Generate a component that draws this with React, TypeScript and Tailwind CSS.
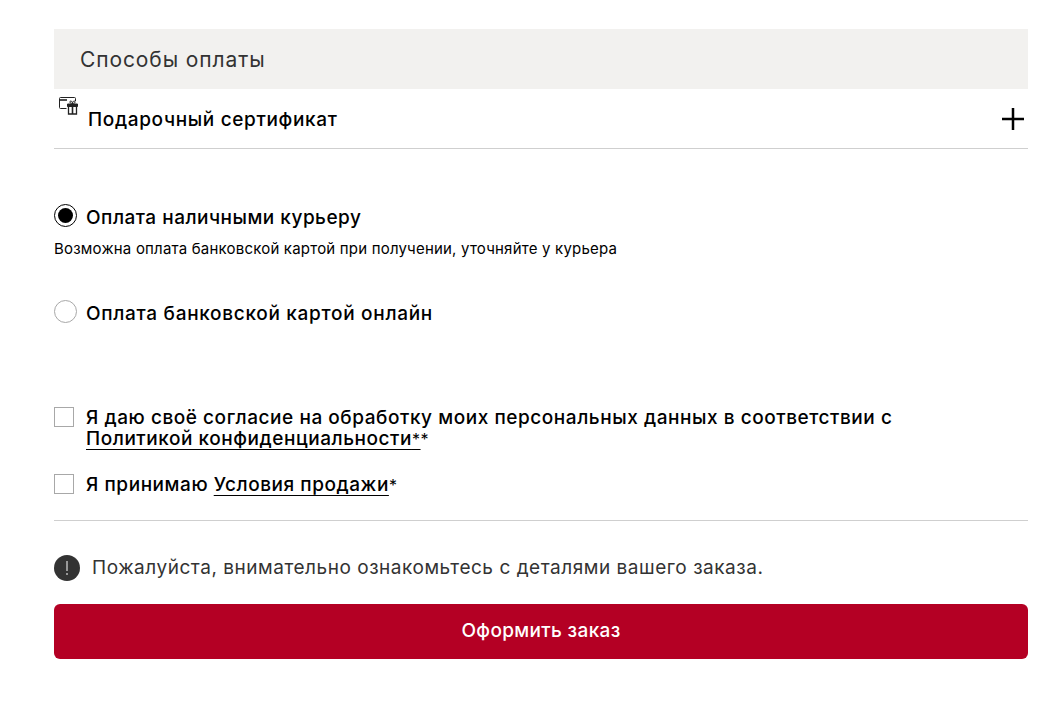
const font = "font-['Inter','Noto_Sans',sans-serif]";

function GiftCardIcon() {
  return (
    <svg width="20" height="18" viewBox="0 0 20 18" fill="none" stroke="#222" strokeWidth="1">
      <path d="M7.500 11.500H1.500a1 1 0 0 1-1-1V1.500a1 1 0 0 1 1-1h14a1 1 0 0 1 1 1V4" />
      <path d="M1 3h7" strokeWidth="1.600" />
      <path d="M8.500 7h10v2.500h-10z" fill="#222" />
      <path d="M9.500 9.500v7.500h8V9.500" strokeWidth="1.300" />
      <path d="M13.500 7v10" strokeWidth="1.600" />
      <path d="M13.500 7c-2.500 0-3.500-3-1.700-3 1.200 0 1.700 1.500 1.700 3zM13.500 7c2.500 0 3.500-3 1.700-3-1.200 0-1.700 1.500-1.700 3z" />
    </svg>
  );
}

function WarningIcon() {
  return (
    <svg width="26" height="26" viewBox="0 0 26 26" className="shrink-0">
      <circle cx="13" cy="13" r="13" fill="#333" />
      <rect x="12.250" y="6" width="1.500" height="10" fill="#bbb" />
      <rect x="12.250" y="18" width="1.500" height="2" fill="#bbb" />
    </svg>
  );
}

function Radio({ checked }: { checked?: boolean }) {
  return (
    <span className={`flex h-[23px] w-[23px] shrink-0 items-center justify-center rounded-full border bg-white ${checked ? 'border-black' : 'border-[#a8a8a8]'}`}>
      {checked && <span className="h-[15px] w-[15px] rounded-full bg-black"></span>}
    </span>
  );
}

function Checkbox() {
  return <span className="block h-5 w-5 shrink-0 border border-[#a8a8a8] bg-white"></span>;
}

export default function App() {
  return (
    <div className={`${font} h-[701px] w-[1047px] overflow-hidden bg-white pl-[54px] pr-[19px] pt-[29px] text-black`}>
      <div className="flex h-[60px] items-center bg-[#f2f1ef] pl-[26px] pt-[2px] text-[21px] tracking-[0.9px] text-[#333]">
        Способы оплаты
      </div>

      {/* Gift certificate row */}
      <div className="relative flex h-[60px] items-center justify-between border-b border-[#cfcfcf] pl-[34px] pr-[4px]">
        <span className="absolute left-[5px] top-[8px]">
          <GiftCardIcon />
        </span>
        <span className="pt-[4px] text-[19px] font-medium tracking-[0.65px]">Подарочный сертификат</span>
        <svg width="22" height="22" viewBox="0 0 22 22" stroke="#000" strokeWidth="2.500">
          <path d="M11 0v22M0 11h22" />
        </svg>
      </div>

      <div className="pt-[55px]">
        <label className="flex items-start gap-[9px]">
          <Radio checked />
          <span className="mt-[2px] text-[19px] font-medium leading-[24px] tracking-[0.5px]">Оплата наличными курьеру</span>
        </label>
        <p className="mt-[9px] text-[15px] leading-[20px] tracking-[0.2px]">
          Возможна оплата банковской картой при получении, уточняйте у курьера
        </p>
        <label className="mt-[41px] flex items-start gap-[9px]">
          <Radio />
          <span className="mt-[2px] text-[19px] font-medium leading-[24px] tracking-[0.7px]">Оплата банковской картой онлайн</span>
        </label>
      </div>

      <div className="pt-[81px]">
        <div className="flex items-start gap-[12px]">
          <Checkbox />
          <p className="text-[19px] font-medium leading-[21px] tracking-[0.55px]">
            Я даю своё согласие на обработку моих персональных данных в соответствии с
            <br />
            <a className="underline decoration-1 underline-offset-[4px] [text-decoration-skip-ink:none]">
              Политикой конфиденциальности<span className="text-[16px] font-normal leading-none">*</span>
            </a>
            <span className="text-[16px] font-normal leading-none">*</span>
          </p>
        </div>
        <div className="mt-[25px] flex items-start gap-[12px]">
          <Checkbox />
          <p className="text-[19px] font-medium leading-[21px] tracking-[0.55px]">
            Я принимаю <a className="underline decoration-1 underline-offset-[4px] [text-decoration-skip-ink:none]">Условия продажи</a>
            <span className="text-[16px] font-normal leading-none">*</span>
          </p>
        </div>
      </div>

      <div className="mt-[25px] border-t border-[#cfcfcf] pt-[33px]">
        <div className="flex items-center gap-[12px]">
          <WarningIcon />
          <span className="text-[19px] tracking-[0.53px] text-[#333]">Пожалуйста, внимательно ознакомьтесь с деталями вашего заказа.</span>
        </div>
        <button className="mt-[21px] flex h-[55px] w-full items-center justify-center rounded-[6px] bg-[#b40024] text-[19px] font-medium tracking-[0.35px] text-white">
          Оформить заказ
        </button>
      </div>
    </div>
  );
}
